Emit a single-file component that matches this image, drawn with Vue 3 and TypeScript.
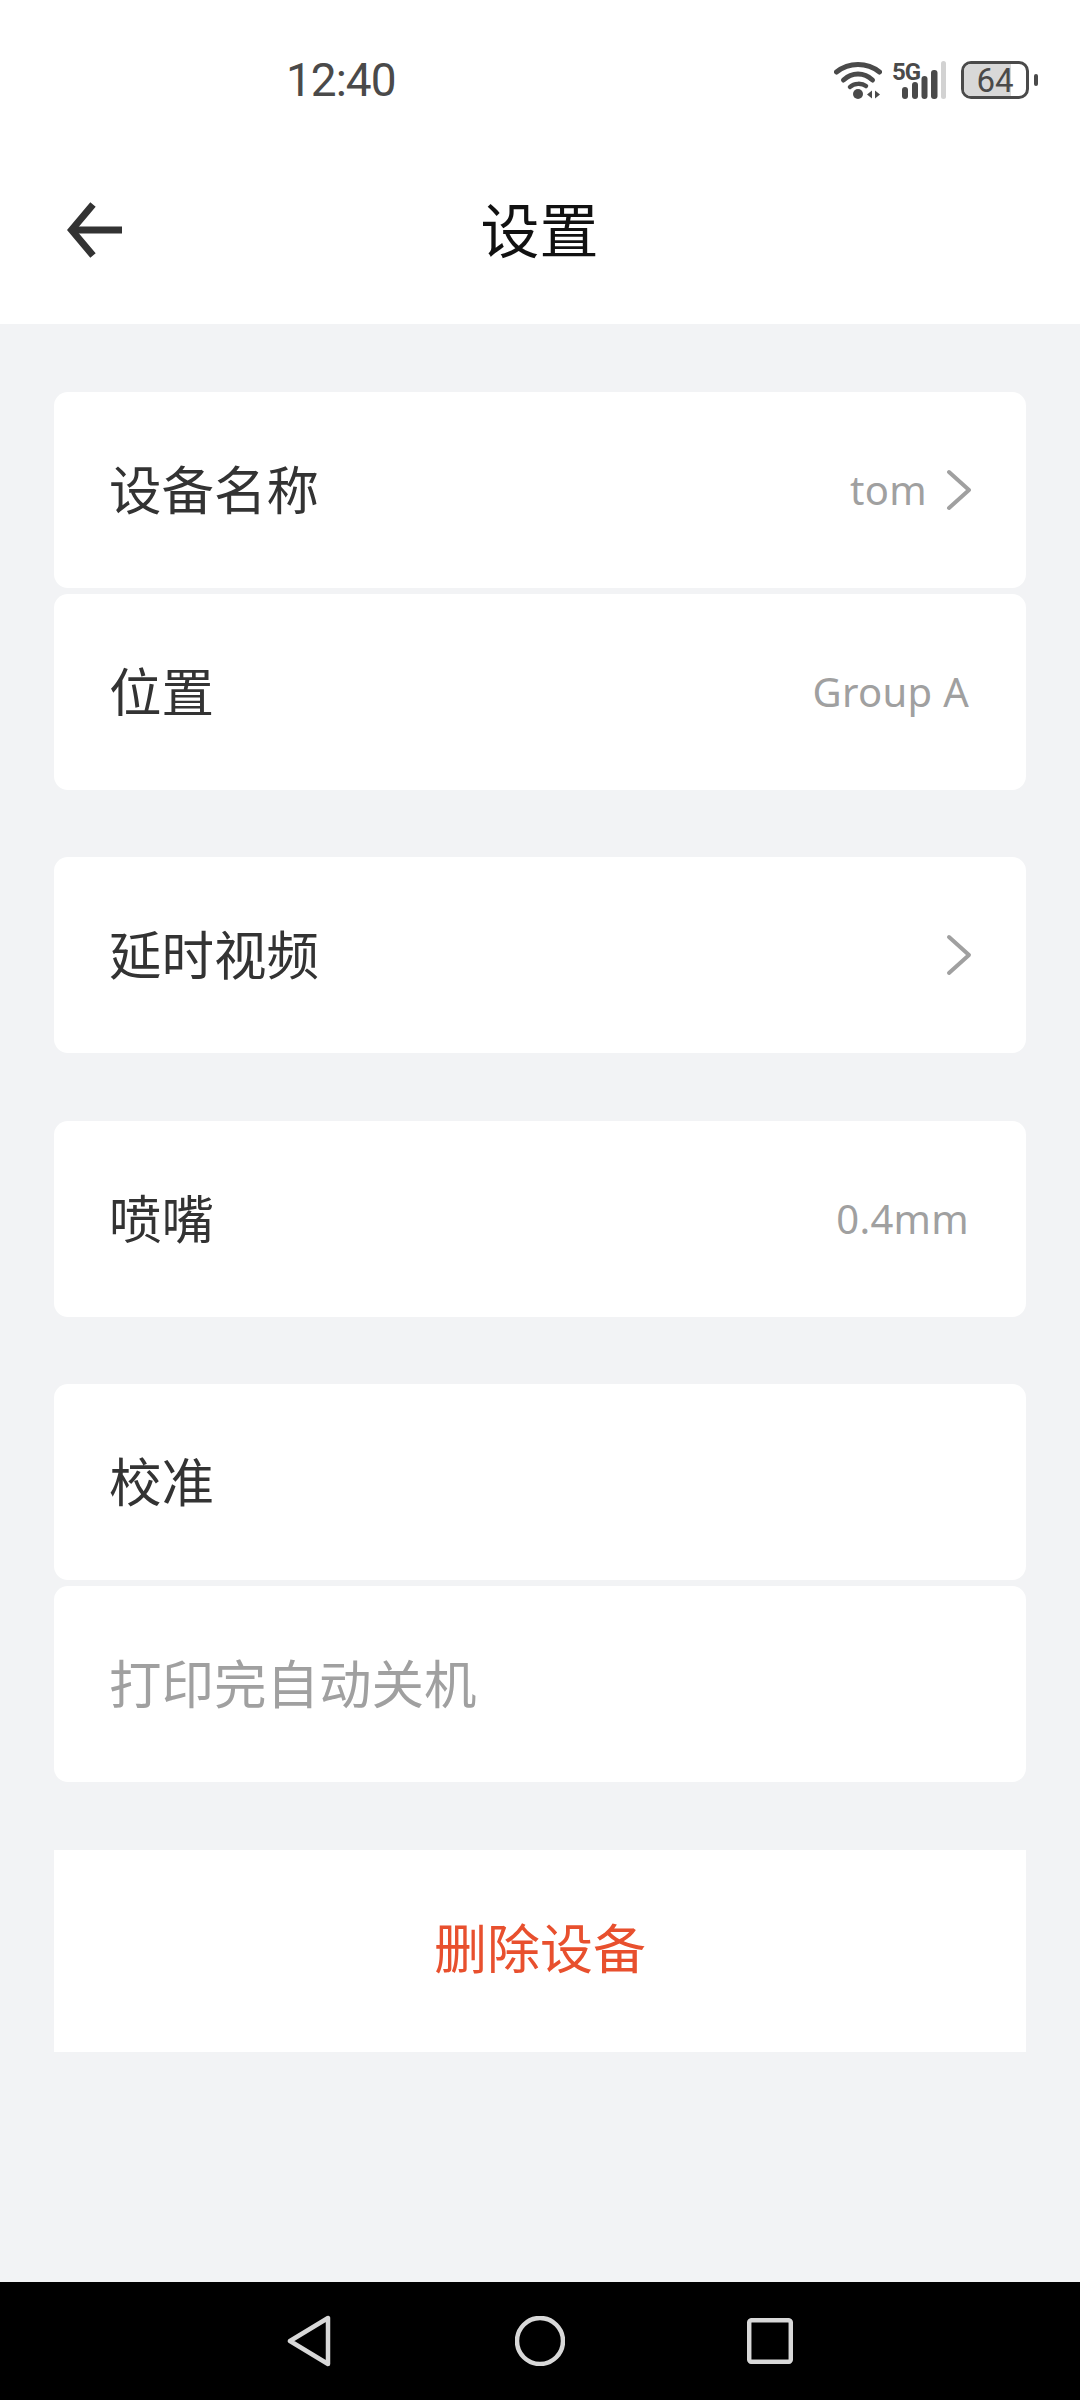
<template>
  <div class="screen">
    <div class="status-bar">
      <span class="time">12:40</span>
      <div class="status-icons">
        <svg class="wifi" width="48" height="38" viewBox="0 0 48 38" fill="none">
          <path d="M2.5 11 C15 1 33 1 45.5 11" stroke="#4a4a4a" stroke-width="5" stroke-linecap="round" />
          <path d="M9.5 19 C18 11 30 11 38.5 19" stroke="#4a4a4a" stroke-width="5" stroke-linecap="round" />
          <path d="M16 26 C20 22 28 22 32 25" stroke="#4a4a4a" stroke-width="4.5" stroke-linecap="round" />
          <circle cx="24" cy="33" r="5" fill="#4a4a4a" />
          <path d="M33 33.5 L38 29.5 V37.5 Z" fill="#4a4a4a" />
          <path d="M41 29.5 L46 33.5 L41 37.5 Z" fill="#4a4a4a" />
        </svg>
        <svg class="signal" width="58" height="52" viewBox="0 -6 58 52">
          <text x="0" y="20" class="five-g">5G</text>
          <rect x="10" y="27" width="6" height="12" rx="3" fill="#4a4a4a" />
          <rect x="20" y="22" width="6" height="17" rx="3" fill="#4a4a4a" />
          <rect x="29.5" y="16" width="6" height="23" rx="3" fill="#4a4a4a" />
          <rect x="39" y="10" width="6.5" height="29" rx="3" fill="#4a4a4a" />
          <rect x="49" y="1" width="5" height="38" rx="2.5" fill="#d2d2d2" />
        </svg>
        <div class="battery">
          <div class="battery-body">
            <div class="battery-fill" :style="{ width: batteryFill + '%' }" />
            <span class="battery-text">{{ batteryLevel }}</span>
          </div>
          <div class="battery-nub" />
        </div>
      </div>
    </div>

    <div class="nav-bar">
      <div class="nav-side">
        <svg width="56" height="56" viewBox="0 0 56 56" fill="none">
          <path d="M26 2.5 L4.5 28 L26 53.5" stroke="#333" stroke-width="7" />
          <path d="M6 28 H55" stroke="#333" stroke-width="7" />
        </svg>
      </div>
      <div class="nav-title">设置</div>
      <div class="nav-side" />
    </div>

    <div class="content">
      <div v-for="(group, gi) in groups" :key="gi" class="group">
        <div v-for="row in group" :key="row.label" class="row">
          <span class="row-label" :class="{ disabled: row.disabled }">{{ row.label }}</span>
          <div class="row-right">
            <span v-if="row.value" class="row-value">{{ row.value }}</span>
            <svg v-if="row.arrow" class="chevron" width="26" height="42" viewBox="0 0 26 42" fill="none">
              <path d="M3 3 L23 21 L3 39" stroke="#a0a0a0" stroke-width="4" stroke-linecap="round" stroke-linejoin="round" />
            </svg>
          </div>
        </div>
      </div>
      <div class="delete-btn">删除设备</div>
    </div>

    <div class="sys-nav">
      <svg width="44" height="52" viewBox="0 0 44 52" fill="none">
        <path d="M41 3 V49 L3 26 Z" stroke="#d8d8d8" stroke-width="4.5" stroke-linejoin="round" />
      </svg>
      <svg class="home" width="50" height="50" viewBox="0 0 50 50" fill="none">
        <circle cx="25" cy="25" r="23" stroke="#d8d8d8" stroke-width="4.5" />
      </svg>
      <svg width="46" height="46" viewBox="0 0 46 46" fill="none">
        <rect x="2.2" y="2.2" width="41.6" height="41.6" rx="2.5" stroke="#d8d8d8" stroke-width="4.5" />
      </svg>
    </div>
  </div>
</template>

<script setup lang="ts">
interface Row {
  label: string
  value?: string
  arrow?: boolean
  disabled?: boolean
}

const batteryLevel = 64
const batteryFill = 76

const groups: Row[][] = [
  [
    { label: '设备名称', value: 'tom', arrow: true },
    { label: '位置', value: 'Group A' },
  ],
  [{ label: '延时视频', arrow: true }],
  [{ label: '喷嘴', value: '0.4mm' }],
  [
    { label: '校准' },
    { label: '打印完自动关机', disabled: true },
  ],
]
</script>

<style>
html, body { margin: 0; padding: 0; }
</style>

<style scoped>
.screen {
  width: 1080px; height: 2400px;
  display: flex; flex-direction: column;
  background: #f2f3f5;
  font-family: "Noto Sans", "Noto Sans CJK SC", sans-serif;
}
.status-bar {
  height: 120px; background: #fff;
  display: flex; align-items: center; justify-content: space-between;
  padding: 40px 42px 0 286px; box-sizing: border-box;
}
.time { font-family: Roboto, sans-serif; font-size: 46px; letter-spacing: -1px; color: #4a4a4a; }
.status-icons { display: flex; align-items: center; }
.wifi { margin-right: 10px; }
.signal { margin-right: 11px; }
.five-g { font-family: Roboto, sans-serif; font-size: 24px; font-weight: 700; fill: #4a4a4a; letter-spacing: -1px; }
.battery { display: flex; align-items: center; gap: 5px; }
.battery-body {
  position: relative; width: 68px; height: 38px; box-sizing: border-box;
  border: 3px solid #4a4a4a; border-radius: 10px; overflow: hidden;
  display: flex; align-items: center; justify-content: center;
}
.battery-fill { position: absolute; left: 0; top: 0; bottom: 0; background: #d8d8d8; }
.battery-text { position: relative; font-family: Roboto, sans-serif; font-size: 33px; color: #4a4a4a; line-height: 1; }
.battery-nub { width: 4px; height: 12px; border-radius: 2px; background: #4a4a4a; }

.nav-bar {
  height: 204px; background: #fff; box-sizing: border-box;
  display: grid; grid-template-columns: 1fr auto 1fr; align-items: center;
  padding: 16px 68px 0 67px;
}
.nav-side { display: flex; align-items: center; }
.nav-title { font-size: 59px; color: #111; line-height: 1; }

.content { flex: 1; display: flex; flex-direction: column; gap: 67.4px; padding: 68px 54px 0; }
.group { display: flex; flex-direction: column; gap: 6px; }
.row {
  height: 196px; background: #fff; border-radius: 14px;
  display: flex; align-items: center; justify-content: space-between;
  padding: 0 57px 0 55px; box-sizing: border-box;
}
.row-label { font-size: 52.5px; color: #333; line-height: 1; }
.row-label.disabled { color: #a0a0a0; }
.row-right { display: flex; align-items: center; gap: 19px; }
.row-value { font-size: 40px; color: #a0a0a0; line-height: 1; letter-spacing: 0.3px; }
.chevron { margin-right: -3px; }
.delete-btn {
  height: 202px; background: #fff; box-sizing: border-box; padding-bottom: 8px;
  display: flex; align-items: center; justify-content: center;
  font-size: 53px; color: #e8502e;
}
.sys-nav {
  height: 118px; background: #000;
  display: flex; align-items: center; padding-left: 287px;
}
.home { margin: 0 182px 0 184px; }
</style>
